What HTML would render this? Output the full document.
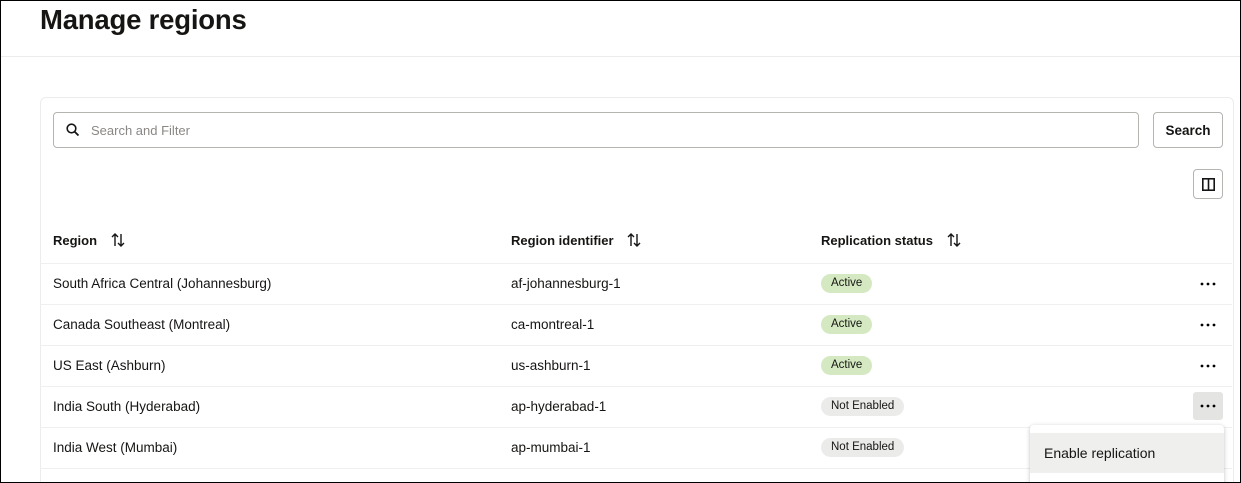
<!DOCTYPE html>
<html style="overflow:hidden;height:483px"><head><style>
*{box-sizing:border-box;margin:0;padding:0}
body{width:1241px;height:483px;overflow:hidden;background:#fff;font-family:"Liberation Sans",sans-serif;color:#161513;position:relative}
.frame{position:absolute;left:0;top:0;width:1241px;height:483px;border:1px solid #000;z-index:10;pointer-events:none}
h1{position:absolute;left:40px;top:4px;font-size:27.5px;font-weight:bold;letter-spacing:-0.2px}
.hl{position:absolute;left:0;top:56px;width:1241px;border-top:1px solid #ececec}
.card{position:absolute;left:40px;top:97px;width:1194px;height:390px;border:1px solid #ececec;border-radius:6px}
.search{position:absolute;left:53px;top:112px;width:1086px;height:36px;border:1px solid #b6b4b0;border-radius:4px}
.search span{position:absolute;left:37px;top:10px;font-size:13px;color:#8a8784}
.btn{position:absolute;left:1153px;top:112px;width:70px;height:36px;border:1px solid #b6b4b0;border-radius:4px;font-size:13.5px;font-weight:bold;text-align:center;line-height:35px}
.colbtn{position:absolute;left:1193px;top:169px;width:30px;height:30px;border:1px solid #b6b4b0;border-radius:4px}
.th{position:absolute;top:233px;font-size:13px;font-weight:bold}
.row{position:absolute;left:40px;width:1192px;border-top:1px solid #efefef}
.td{position:absolute;font-size:13.5px}
.badge{position:absolute;left:821px;height:19px;border-radius:10px;font-size:11.5px;line-height:19px;padding:0 10px}
.act{background:#d4e9c1}
.ne{background:#ebebea}
.dots{position:absolute;left:1193px;width:30px;height:28px;border-radius:3px}
.dots svg{position:absolute;left:7px;top:12px}
.menu{position:absolute;left:1030px;top:425px;width:194px;height:62px;background:#fff;border-radius:4px;box-shadow:0 1px 4px rgba(0,0,0,.25)}
.menu div{position:absolute;left:0;top:8px;width:194px;height:40px;background:#efefee;font-size:14px;line-height:40px;padding-left:14px}
</style></head><body>
<div class="frame"></div>
<h1>Manage regions</h1>
<div class="hl"></div>
<div class="card"></div>
<div class="search"><svg style="position:absolute;left:12px;top:10px" width="14" height="14" viewBox="0 0 14 14"><circle cx="5.5" cy="5.5" r="4.3" fill="none" stroke="#161513" stroke-width="1.6"/><path d="M8.7 8.7L12.5 12.5" stroke="#161513" stroke-width="1.8"/></svg><span>Search and Filter</span></div>
<div class="btn">Search</div>
<div class="colbtn"><svg style="position:absolute;left:8px;top:8px" width="13" height="13" viewBox="0 0 13 13"><rect x="0.8" y="0.8" width="11.4" height="11.4" fill="none" stroke="#161513" stroke-width="1.6"/><path d="M6.5 1v11" stroke="#161513" stroke-width="1.6"/></svg></div>
<div class="th" style="left:53px">Region <svg style="margin-left:10px;vertical-align:-2px" width="14" height="14" viewBox="0 0 14 14"><path d="M4 13V1M1 4l3-3 3 3M10 1v12M7 10l3 3 3-3" fill="none" stroke="#161513" stroke-width="1.4"/></svg></div>
<div class="th" style="left:511px">Region identifier <svg style="margin-left:10px;vertical-align:-2px" width="14" height="14" viewBox="0 0 14 14"><path d="M4 13V1M1 4l3-3 3 3M10 1v12M7 10l3 3 3-3" fill="none" stroke="#161513" stroke-width="1.4"/></svg></div>
<div class="th" style="left:821px">Replication status <svg style="margin-left:10px;vertical-align:-2px" width="14" height="14" viewBox="0 0 14 14"><path d="M4 13V1M1 4l3-3 3 3M10 1v12M7 10l3 3 3-3" fill="none" stroke="#161513" stroke-width="1.4"/></svg></div>
<div class="row" style="top:263px"></div><div class="row" style="top:304px"></div><div class="row" style="top:345px"></div><div class="row" style="top:386px"></div><div class="row" style="top:427px"></div><div class="row" style="top:468px"></div>
<div class="td" style="left:53px;top:276px">South Africa Central (Johannesburg)</div><div class="td" style="left:511px;top:276px">af-johannesburg-1</div><div class="badge act" style="top:274px">Active</div><div class="dots" style="top:270px"><svg width="16" height="4"><circle cx="2" cy="2" r="1.4"/><circle cx="8" cy="2" r="1.4"/><circle cx="14" cy="2" r="1.4"/></svg></div>
<div class="td" style="left:53px;top:317px">Canada Southeast (Montreal)</div><div class="td" style="left:511px;top:317px">ca-montreal-1</div><div class="badge act" style="top:315px">Active</div><div class="dots" style="top:311px"><svg width="16" height="4"><circle cx="2" cy="2" r="1.4"/><circle cx="8" cy="2" r="1.4"/><circle cx="14" cy="2" r="1.4"/></svg></div>
<div class="td" style="left:53px;top:358px">US East (Ashburn)</div><div class="td" style="left:511px;top:358px">us-ashburn-1</div><div class="badge act" style="top:356px">Active</div><div class="dots" style="top:352px"><svg width="16" height="4"><circle cx="2" cy="2" r="1.4"/><circle cx="8" cy="2" r="1.4"/><circle cx="14" cy="2" r="1.4"/></svg></div>
<div class="td" style="left:53px;top:399px">India South (Hyderabad)</div><div class="td" style="left:511px;top:399px">ap-hyderabad-1</div><div class="badge ne" style="top:397px">Not Enabled</div><div class="dots" style="top:392px;background:#e4e4e3"><svg width="16" height="4"><circle cx="2" cy="2" r="1.4"/><circle cx="8" cy="2" r="1.4"/><circle cx="14" cy="2" r="1.4"/></svg></div>
<div class="td" style="left:53px;top:440px">India West (Mumbai)</div><div class="td" style="left:511px;top:440px">ap-mumbai-1</div><div class="badge ne" style="top:438px">Not Enabled</div>
<div class="menu"><div>Enable replication</div></div>
</body></html>
